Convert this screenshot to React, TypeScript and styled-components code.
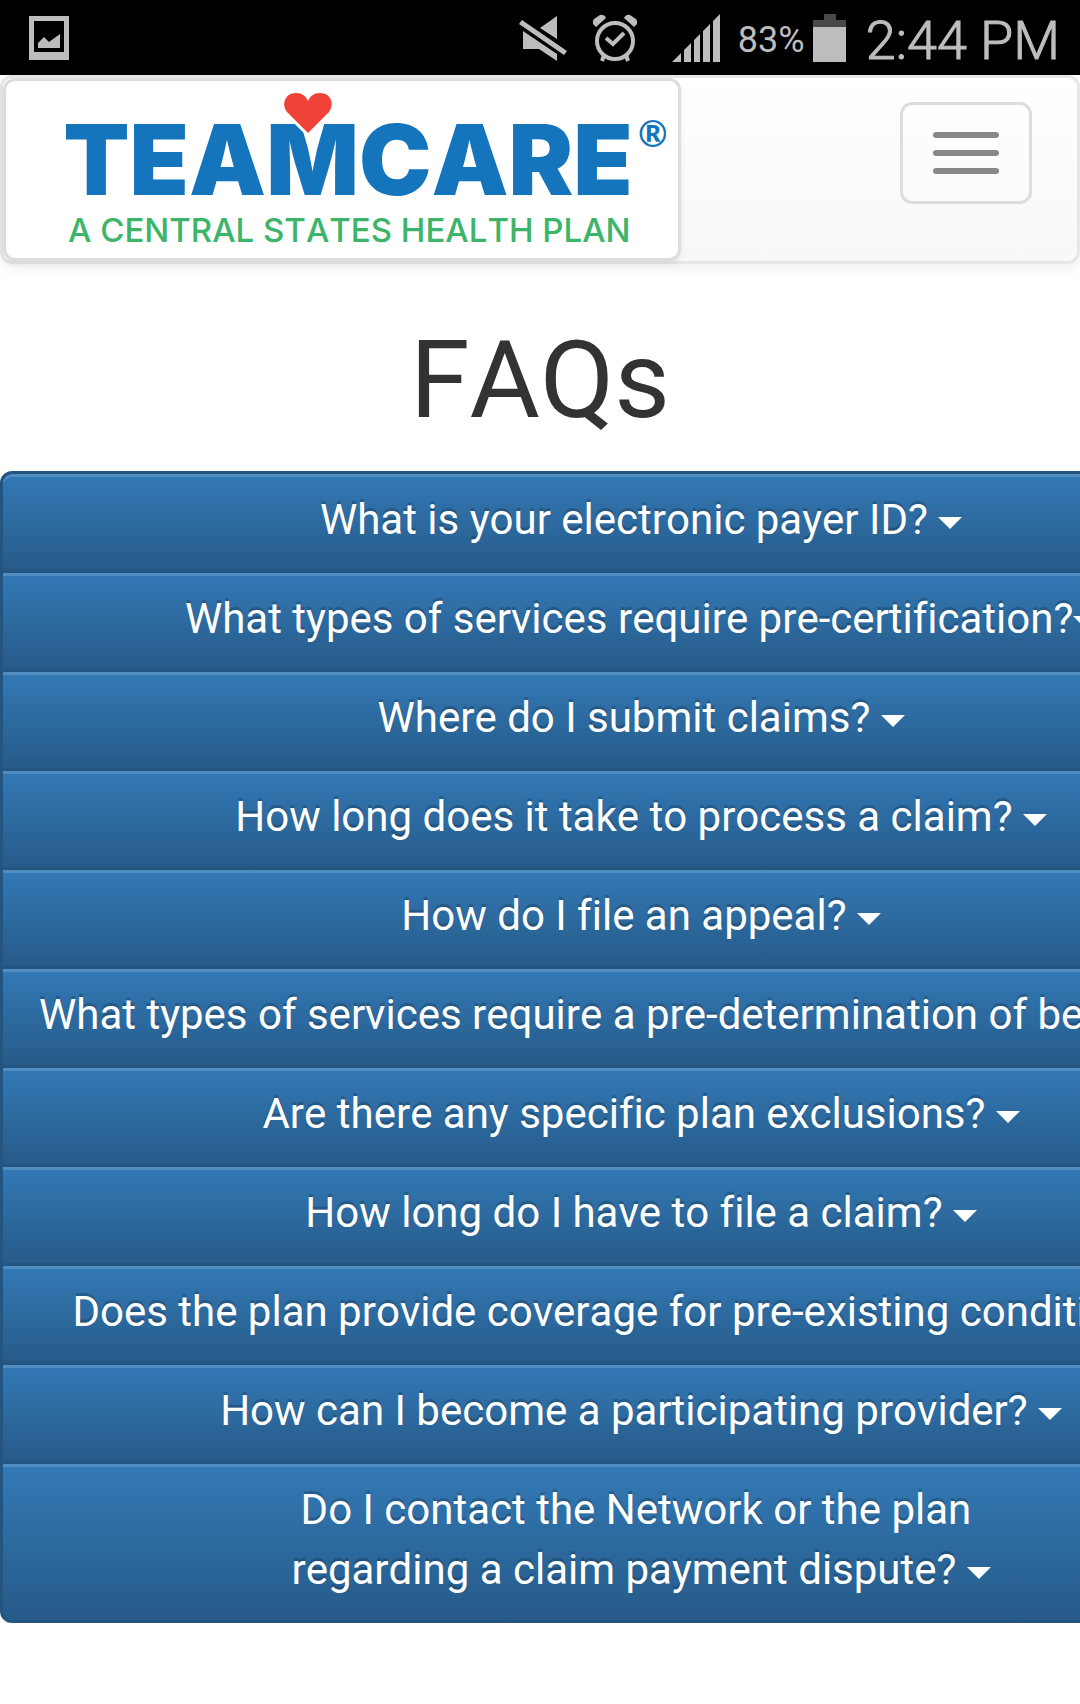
import React from "react";
import styled, { createGlobalStyle, css } from "styled-components";

const GlobalStyle = createGlobalStyle`
  * { box-sizing: border-box; }
  body {
    margin: 0;
    background: #fff;
    color: #333;
    font-family: Roboto, "Liberation Sans", sans-serif;
    font-size: 42px;
    font-kerning: none;
    font-variant-ligatures: none;
    line-height: 60px;
    overflow-x: hidden;
  }
`;

const StatusBar = styled.div`
  display: flex;
  align-items: center;
  justify-content: space-between;
  height: 75px;
  padding: 0 20px 0 29px;
  background: #000;
  color: #bdbdbd;
`;

const StatusGroup = styled.div`
  display: flex;
  align-items: center;
`;

const StatusIcon = styled.svg<{ $gap?: number }>`
  display: block;
  flex: none;
  fill: #bdbdbd;
  stroke: none;
  margin-right: ${(p) => p.$gap ?? 0}px;
`;

const StatusText = styled.span<{ $size: number; $light?: boolean; $gap?: number }>`
  padding-top: 6px;
  margin-right: ${(p) => p.$gap ?? 0}px;
  font-size: ${(p) => p.$size}px;
  font-weight: ${(p) => (p.$light ? 300 : 400)};
  -webkit-text-stroke: ${(p) => (p.$light ? 1 : 0)}px #bdbdbd;
  line-height: 69px;
`;

const Navbar = styled.nav`
  display: flex;
  align-items: flex-start;
  justify-content: space-between;
  border: 3px solid #e7e7e7;
  border-radius: 12px;
  background: linear-gradient(#fff, #f8f8f8);
  box-shadow: 0 3px 15px rgba(0, 0, 0, 0.075);
`;

const Brand = styled.a`
  display: block;
  padding: 12px 12px 12px 60px;
  border: 3px solid #ddd;
  border-radius: 12px;
  background: #fff;
  box-shadow: 0 3px 6px rgba(0, 0, 0, 0.075);
`;

const LogoArt = styled.svg`
  display: block;
`;

const Toggle = styled.button`
  display: flex;
  flex-direction: column;
  gap: 12px;
  margin: 24px 45px 0 0;
  padding: 27px 30px;
  border: 3px solid #ddd;
  border-radius: 12px;
  background: transparent;
`;

const Bar = styled.span`
  width: 66px;
  height: 6px;
  border-radius: 3px;
  background: #888;
`;

const Title = styled.h1`
  margin: 58px 0 32px;
  font-size: 108px;
  font-weight: 400;
  line-height: 117px;
  text-align: center;
`;

const Questions = styled.div`
  display: flex;
  flex-direction: column;
  width: max-content;
`;

const edge = {
  first: css`
    border-radius: 12px 12px 0 0;
  `,
  middle: css`
    margin-top: -3px;
  `,
  last: css`
    margin-top: -3px;
    border-radius: 0 0 12px 12px;
  `,
};

const Question = styled.button<{ $edge: keyof typeof edge }>`
  padding: 16px 36px 20px;
  border: 3px solid #245580;
  background: #265a88 linear-gradient(#337ab7, #265a88) border-box;
  box-shadow: inset 0 3px 0 rgba(255, 255, 255, 0.15), 0 3px 3px rgba(0, 0, 0, 0.075);
  color: #fff;
  font: inherit;
  font-kerning: inherit;
  font-variant-ligatures: inherit;
  text-align: center;
  text-shadow: 0 -3px 0 rgba(0, 0, 0, 0.2);
  white-space: pre-line;
  ${(p) => edge[p.$edge]}
`;

const Caret = styled.span`
  display: inline-block;
  vertical-align: middle;
  border-top: 12px solid #fff;
  border-left: 12px solid transparent;
  border-right: 12px solid transparent;
`;

const questions = [
  "What is your electronic payer ID? ",
  "What types of services require pre-certification?",
  "Where do I submit claims? ",
  "How long does it take to process a claim? ",
  "How do I file an appeal? ",
  "What types of services require a pre-determination of benefits? ",
  "Are there any specific plan exclusions? ",
  "How long do I have to file a claim? ",
  "Does the plan provide coverage for pre-existing conditions? ",
  "How can I become a participating provider? ",
  "Do I contact the Network or the plan\u00a0\nregarding a claim payment dispute? ",
];

function Logo() {
  return (
    <LogoArt width="600" height="153" viewBox="0 0 600 153" role="img" aria-label="TeamCare, a Central States health plan">
      <text x="-3" y="102" fontFamily="Inter, sans-serif" fontWeight="900" fontSize="97" fill="#1475bc">TEAMCARE</text>
      <text x="572" y="54" fontFamily="Lato, sans-serif" fontWeight="700" fontSize="36" fill="#1475bc">®</text>
      <path d="M242 40L221 19C215 11 219 0 230 0C236 0 240 3 242 8C244 3 248 0 254 0C265 0 269 11 263 19Z" fill="#f04238" stroke="#fff" strokeWidth="6" paintOrder="stroke" />
      <text x="2" y="149" fontFamily="Inter, sans-serif" fontWeight="500" fontSize="33" fill="#3cb56a">A CENTRAL STATES HEALTH PLAN</text>
    </LogoArt>
  );
}

export default function App() {
  return (
    <>
      <GlobalStyle />
      <StatusBar>
        <StatusIcon width="40" height="44" viewBox="0 0 40 44" aria-hidden="true">
          <path fillRule="evenodd" d="M0 0H40V44H0ZM5 5V36H35V5Z" />
          <path d="M9 32V27L15 21L20 26L31 18V32Z" />
        </StatusIcon>
        <StatusGroup>
          <StatusIcon $gap={25} width="48" height="48" viewBox="519 13 48 48" aria-hidden="true">
            <path d="M540 27L557 15V38ZM523 30L557 53V60L539 48H523ZM522 19L567 50L564 54L519 23Z" />
          </StatusIcon>
          <StatusIcon $gap={34} width="46" height="48" viewBox="592 13 46 48" aria-hidden="true">
            <circle cx="615" cy="40" r="18" fill="none" stroke="#bdbdbd" strokeWidth="4" />
            <path d="M606 37L613 43L624 32" fill="none" stroke="#bdbdbd" strokeWidth="4" />
            <path d="M596 26L593 23Q592 20 594 18L600 14Q604 13 606 17ZM634 26L637 23Q638 20 636 18L630 14Q626 13 624 17Z" />
            <path d="M604 54L602 60M626 54L628 60" stroke="#bdbdbd" strokeWidth="4" />
          </StatusIcon>
          <StatusIcon $gap={18} width="48" height="48" viewBox="0 0 48 48" aria-hidden="true">
            <path d="M0 48L9 39V48ZM12 48V36L19 29V48ZM22 48V26L28 20V48ZM31 48V17L38 10V48ZM41 48V7L48 0V48Z" />
          </StatusIcon>
          <StatusText $size={36} $gap={8}>83%</StatusText>
          <StatusIcon $gap={20} width="33" height="48" viewBox="0 0 33 48" aria-hidden="true">
            <path d="M0 13V6H11V0H23V6H33V13Z" fill="#484848" />
            <path d="M0 13H33V48H0Z" />
          </StatusIcon>
          <StatusText $size={54} $light>2:44 PM</StatusText>
        </StatusGroup>
      </StatusBar>
      <Navbar aria-label="Main">
        <Brand href="#home">
          <Logo />
        </Brand>
        <Toggle type="button" aria-label="Toggle navigation">
          <Bar />
          <Bar />
          <Bar />
        </Toggle>
      </Navbar>
      <main>
        <Title>FAQs</Title>
        <Questions>
          {questions.map((text, i) => (
            <Question
              key={text}
              type="button"
              $edge={i === 0 ? "first" : i === questions.length - 1 ? "last" : "middle"}
            >
              {text}
              <Caret />
            </Question>
          ))}
        </Questions>
      </main>
    </>
  );
}
